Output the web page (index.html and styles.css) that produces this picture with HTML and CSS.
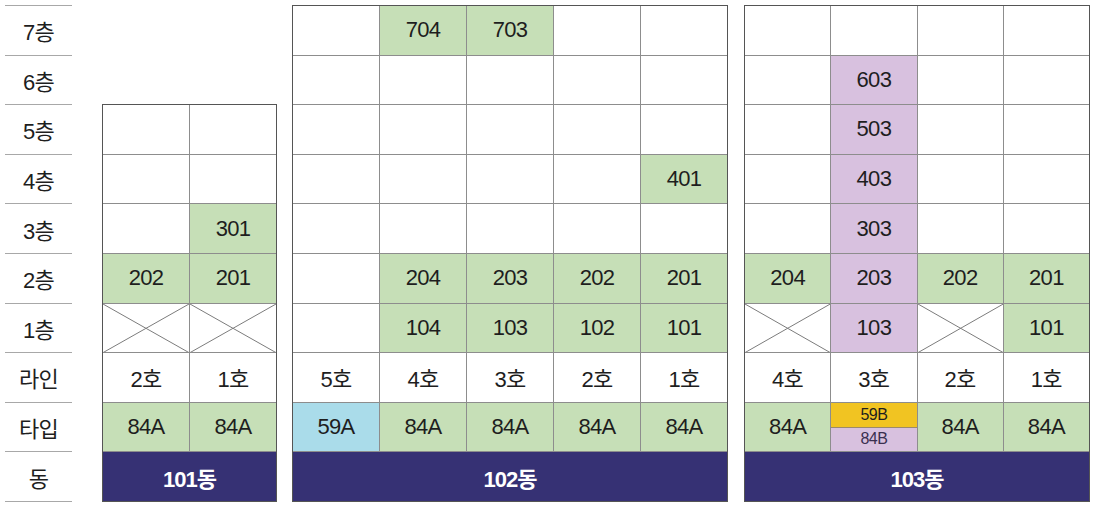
FILE: index.html
```html
<!DOCTYPE html>
<html lang="ko">
<head>
<meta charset="utf-8">
<link rel="stylesheet" href="styles.css">
</head>
<body>
<div class="board">
  <div class="labels">
    <div class="lab">7층</div>
    <div class="lab">6층</div>
    <div class="lab">5층</div>
    <div class="lab">4층</div>
    <div class="lab">3층</div>
    <div class="lab">2층</div>
    <div class="lab">1층</div>
    <div class="lab">라인</div>
    <div class="lab">타입</div>
    <div class="lab">동</div>
  </div>

  <div class="bld b101">
    <div class="c"></div><div class="c"></div>
    <div class="c"></div><div class="c"></div>
    <div class="c"></div><div class="c g">301</div>
    <div class="c g">202</div><div class="c g">201</div>
    <div class="c x"><svg viewBox="0 0 100 100" preserveAspectRatio="none"><line x1="0" y1="0" x2="100" y2="100"/><line x1="100" y1="0" x2="0" y2="100"/></svg></div>
    <div class="c x"><svg viewBox="0 0 100 100" preserveAspectRatio="none"><line x1="0" y1="0" x2="100" y2="100"/><line x1="100" y1="0" x2="0" y2="100"/></svg></div>
    <div class="c">2호</div><div class="c">1호</div>
    <div class="c g">84A</div><div class="c g">84A</div>
    <div class="c dong">101동</div>
  </div>

  <div class="bld b102">
    <div class="c"></div><div class="c g">704</div><div class="c g">703</div><div class="c"></div><div class="c"></div>
    <div class="c"></div><div class="c"></div><div class="c"></div><div class="c"></div><div class="c"></div>
    <div class="c"></div><div class="c"></div><div class="c"></div><div class="c"></div><div class="c"></div>
    <div class="c"></div><div class="c"></div><div class="c"></div><div class="c"></div><div class="c g">401</div>
    <div class="c"></div><div class="c"></div><div class="c"></div><div class="c"></div><div class="c"></div>
    <div class="c"></div><div class="c g">204</div><div class="c g">203</div><div class="c g">202</div><div class="c g">201</div>
    <div class="c"></div><div class="c g">104</div><div class="c g">103</div><div class="c g">102</div><div class="c g">101</div>
    <div class="c">5호</div><div class="c">4호</div><div class="c">3호</div><div class="c">2호</div><div class="c">1호</div>
    <div class="c bl">59A</div><div class="c g">84A</div><div class="c g">84A</div><div class="c g">84A</div><div class="c g">84A</div>
    <div class="c dong">102동</div>
  </div>

  <div class="bld b103">
    <div class="c"></div><div class="c"></div><div class="c"></div><div class="c"></div>
    <div class="c"></div><div class="c p">603</div><div class="c"></div><div class="c"></div>
    <div class="c"></div><div class="c p">503</div><div class="c"></div><div class="c"></div>
    <div class="c"></div><div class="c p">403</div><div class="c"></div><div class="c"></div>
    <div class="c"></div><div class="c p">303</div><div class="c"></div><div class="c"></div>
    <div class="c g">204</div><div class="c p">203</div><div class="c g">202</div><div class="c g">201</div>
    <div class="c x"><svg viewBox="0 0 100 100" preserveAspectRatio="none"><line x1="0" y1="0" x2="100" y2="100"/><line x1="100" y1="0" x2="0" y2="100"/></svg></div>
    <div class="c p">103</div>
    <div class="c x"><svg viewBox="0 0 100 100" preserveAspectRatio="none"><line x1="0" y1="0" x2="100" y2="100"/><line x1="100" y1="0" x2="0" y2="100"/></svg></div>
    <div class="c g">101</div>
    <div class="c">4호</div><div class="c">3호</div><div class="c">2호</div><div class="c">1호</div>
    <div class="c g">84A</div>
    <div class="c split"><div class="half y">59B</div><div class="half pp">84B</div></div>
    <div class="c g">84A</div><div class="c g">84A</div>
    <div class="c dong">103동</div>
  </div>
</div>
</body>
</html>
```

FILE: styles.css
```css
html, body {
  margin: 0;
  padding: 0;
  background: #ffffff;
}
body {
  font-family: "Liberation Sans", "Noto Sans CJK KR", sans-serif;
  color: #1e1e1e;
}
.board {
  display: flex;
  align-items: flex-end;
  padding: 5px 0 0 5px;
  height: 497px;
}
.labels {
  width: 67px;
  height: 497px;
  display: flex;
  flex-direction: column;
  border-top: 1.5px solid #a8a8a8;
  box-sizing: border-box;
  margin-right: 30px;
}
.lab {
  flex: 1;
  display: flex;
  align-items: center;
  justify-content: center;
  border-bottom: 1.5px solid #a8a8a8;
  font-size: 22px;
  letter-spacing: -0.8px;
}
.bld {
  display: grid;
  gap: 1px;
  background: #8d8d8d;
  border: 1px solid #555555;
  box-sizing: border-box;
}
.b101 {
  width: 175px;
  height: 398px;
  grid-template-columns: repeat(2, 1fr);
  grid-template-rows: repeat(8, 1fr);
  margin-right: 15px;
}
.b102 {
  width: 436px;
  height: 497px;
  grid-template-columns: repeat(5, 1fr);
  grid-template-rows: repeat(10, 1fr);
  margin-right: 16px;
}
.b103 {
  width: 346px;
  height: 497px;
  grid-template-columns: repeat(4, 1fr);
  grid-template-rows: repeat(10, 1fr);
}
.c {
  background: #ffffff;
  display: flex;
  align-items: center;
  justify-content: center;
  font-size: 22px;
  letter-spacing: -0.7px;
  position: relative;
  min-height: 0;
}
.g { background: #c6dfb7; }
.p { background: #d8c1df; }
.bl { background: #aadcea; }
.x svg {
  position: absolute;
  inset: 0;
  width: 100%;
  height: 100%;
}
.x line {
  stroke: #7c7c7c;
  stroke-width: 1;
  vector-effect: non-scaling-stroke;
}
.dong {
  grid-column: 1 / -1;
  background: #363174;
  color: #ffffff;
  font-weight: bold;
  font-size: 22px;
  letter-spacing: -1px;
}
.split {
  flex-direction: column;
  align-items: stretch;
  background: #d8c1df;
}
.half {
  flex: 1;
  display: flex;
  align-items: center;
  justify-content: center;
  font-size: 16px;
  letter-spacing: -0.6px;
}
.half.y {
  background: #f1c422;
  border-bottom: 1px solid #9c8a6a;
}
.half.pp {
  background: #d8c1df;
  color: #3a3050;
}
```
